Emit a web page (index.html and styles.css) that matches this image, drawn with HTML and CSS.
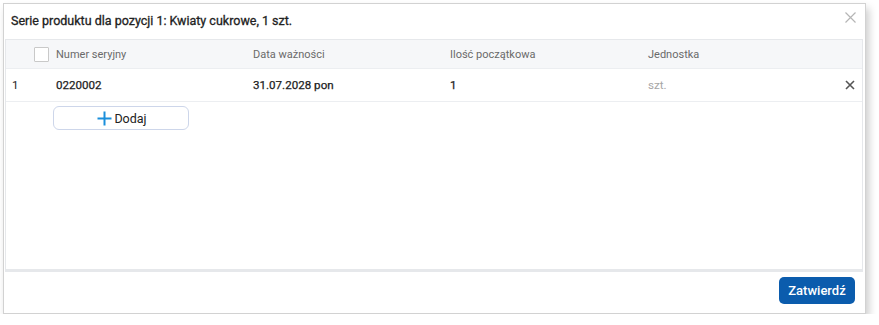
FILE: index.html
```html
<!DOCTYPE html>
<html lang="pl">
<head>
<meta charset="utf-8">
<link rel="stylesheet" href="styles.css">
</head>
<body>
<div class="dialog">
  <div class="dialog-head">
    <h1 class="title">Serie produktu dla pozycji 1: Kwiaty cukrowe, 1 szt.</h1>
    <button class="close" aria-label="Zamknij">
      <svg width="11" height="11" viewBox="0 0 11 11"><path d="M0.5 0.5L10.5 10.5M10.5 0.5L0.5 10.5" stroke="#b5b5b5" stroke-width="1.2" fill="none"/></svg>
    </button>
  </div>
  <div class="panel">
    <div class="row head">
      <div class="cell num"><span class="checkbox"></span></div>
      <div class="cell">Numer seryjny</div>
      <div class="cell">Data ważności</div>
      <div class="cell">Ilość początkowa</div>
      <div class="cell">Jednostka</div>
      <div class="cell act"></div>
    </div>
    <div class="row data">
      <div class="cell num">1</div>
      <div class="cell strong">0220002</div>
      <div class="cell strong">31.07.2028 pon</div>
      <div class="cell strong">1</div>
      <div class="cell muted">szt.</div>
      <div class="cell act">
        <svg width="10" height="10" viewBox="0 0 10 10"><path d="M1 1L9 9M9 1L1 9" stroke="#555" stroke-width="1.6" fill="none"/></svg>
      </div>
    </div>
    <div class="add-wrap">
      <button class="add">
        <svg width="15" height="15" viewBox="0 0 15 15"><path d="M7.5 0.5V14.5M0.5 7.5H14.5" stroke="#1a8fdc" stroke-width="2" fill="none"/></svg>
        <span>Dodaj</span>
      </button>
    </div>
  </div>
  <div class="dialog-foot">
    <button class="confirm">Zatwierdź</button>
  </div>
</div>
</body>
</html>
```
FILE: styles.css
```css
* { box-sizing: border-box; }
html, body { margin: 0; padding: 0; background: #fff; }
body {
  padding: 3px 0 0 3px;
  font-family: Roboto, "Liberation Sans", Arial, sans-serif;
  color: #222;
}
.dialog {
  width: 863px;
  height: 311px;
  border: 1px solid #d2d2d2;
  background: #fff;
  box-shadow: 3px 5px 8px rgba(0, 0, 0, 0.2);
  display: flex;
  flex-direction: column;
  padding: 0 2px 0 1px;
}
.dialog-head {
  height: 35px;
  display: flex;
  align-items: center;
  justify-content: space-between;
  padding: 0 7px 2px 6px;
}
.title {
  margin: 0;
  font-size: 12.5px;
  font-weight: 400;
  -webkit-text-stroke: 0.3px #222;
  color: #222;
}
.close {
  border: 0;
  background: none;
  padding: 0;
  display: flex;
  margin-top: -6px;
}
.panel {
  height: 233px;
  border: 1px solid #e6e8eb;
  border-width: 1px 1px 3px 1px;
  border-color: #e6e8eb;
}
.row {
  display: grid;
  grid-template-columns: 46px 197px 197px 198px 1fr 40px;
  align-items: center;
}
.row.head {
  height: 29px;
  background: #f6f7f9;
  font-size: 11px;
  color: #6a6a6a;
  border-bottom: 1px solid #eceef1;
}
.row.data {
  height: 33px;
  font-size: 11.6px;
  border-bottom: 1px solid #eceef1;
}
.cell { padding-left: 4px; }
.cell.num { padding-left: 6px; }
.checkbox {
  display: block;
  width: 15px;
  height: 15px;
  border: 1px solid #c9c9c9;
  border-radius: 1px;
  background: #fff;
  margin-left: 22px;
}
.strong { font-weight: 400; -webkit-text-stroke: 0.25px #1c1c1c; color: #1c1c1c; }
.muted { color: #a6a6a6; }
.act { display: flex; justify-content: flex-end; padding-right: 7px; }
.add-wrap { padding: 4px 0 0 47px; }
.add {
  width: 136px;
  height: 24px;
  border: 1px solid #cdd6ea;
  border-radius: 6px;
  background: #fff;
  display: flex;
  align-items: center;
  justify-content: center;
  gap: 2px;
  font-family: Roboto, "Liberation Sans", Arial, sans-serif;
  font-size: 12.5px;
  color: #222;
  padding: 0 0 0 2px;
}
.dialog-foot {
  flex: 1;
  display: flex;
  justify-content: flex-end;
  align-items: flex-start;
  padding: 5px 8px 0 0;
}
.confirm {
  width: 76px;
  height: 27px;
  border: 0;
  border-radius: 5px;
  background: #0b5cad;
  color: #fff;
  font-family: Roboto, "Liberation Sans", Arial, sans-serif;
  font-size: 13px;
  font-weight: 500;
}
```
